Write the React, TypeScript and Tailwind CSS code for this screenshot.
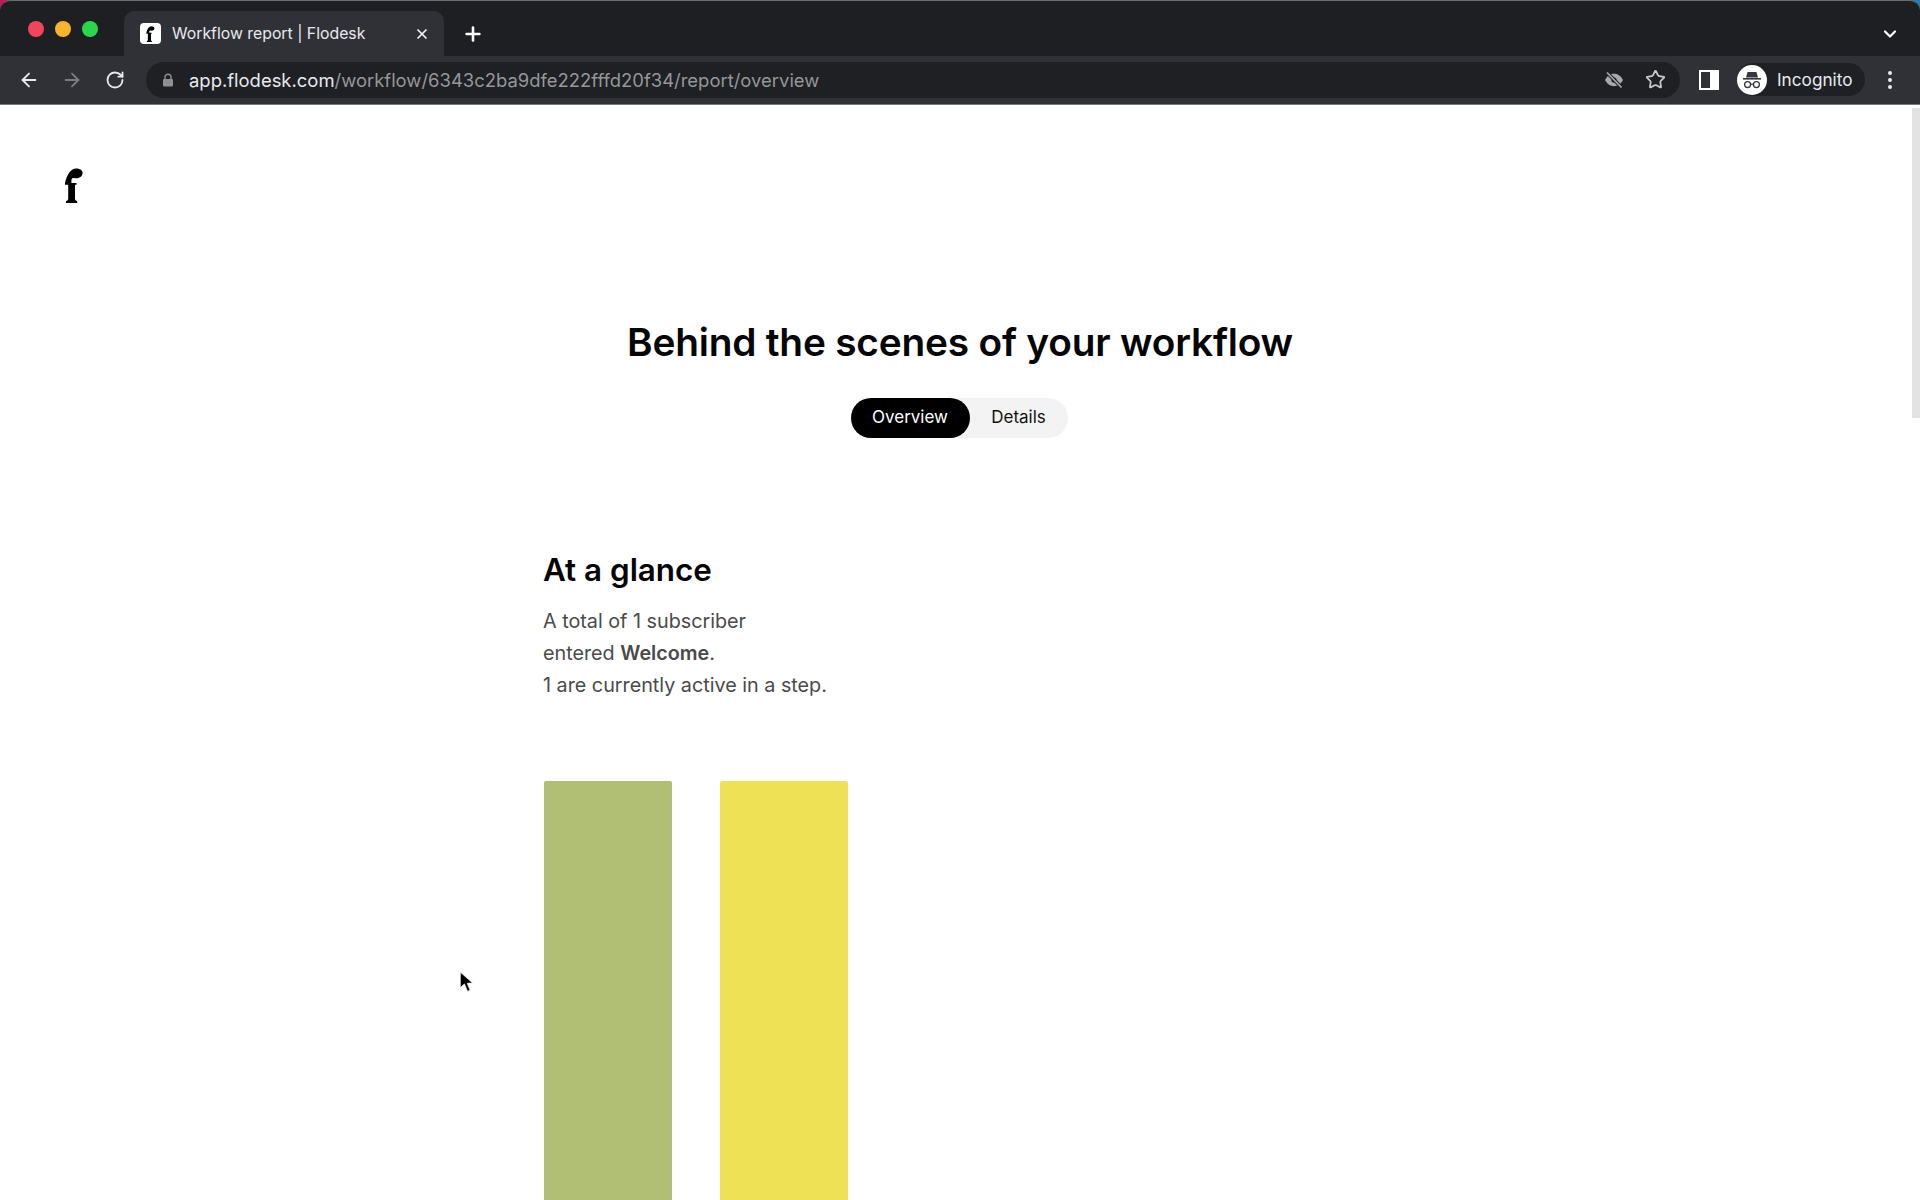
import { ArrowLeft, ArrowRight, RotateCw, X, Plus, ChevronDown, Star } from "lucide-react";

function FLogo({ className }: { className?: string }) {
  return (
    <svg viewBox="0 0 18 35" className={className} fill="currentColor">
      <path d="M0 15 C1.5 8 5 1 10.5 0.5 C15 0.2 18 2.5 17.6 5.5 C17 9.5 12.5 11 9 10 C6.8 9.5 6 11.5 6.5 15 L11.5 15 L11.5 16.8 L10 16.8 L10 30.5 C10 32 10.8 32.8 12.2 33.2 L12.2 35 L1 35 L1 33.2 C2.4 32.8 3.2 32 3.2 30.5 L3.2 16.8 L0 16.8 Z" />
    </svg>
  );
}

function Incognito() {
  return (
    <svg viewBox="0 0 30 30" className="w-[30px] h-[30px]">
      <circle cx="15" cy="15" r="15" fill="#fff" />
      <path d="M10.5 7 h9 l1.5 5.5 h-12 z" fill="#33363a" />
      <rect x="6" y="13" width="18" height="1.6" fill="#33363a" />
      <circle cx="10.6" cy="19.6" r="3" fill="none" stroke="#33363a" strokeWidth="1.3" />
      <circle cx="19.4" cy="19.6" r="3" fill="none" stroke="#33363a" strokeWidth="1.3" />
      <path d="M13.6 19.2 h2.8" stroke="#33363a" strokeWidth="1.2" />
    </svg>
  );
}

function EyeSlash() {
  return (
    <svg viewBox="0 0 20 20" className="h-[20px] w-[20px]">
      <path d="M1 10 C3.5 5.5 6.5 3.8 10 3.8 C13.5 3.8 16.5 5.5 19 10 C16.5 14.5 13.5 16.2 10 16.2 C6.5 16.2 3.5 14.5 1 10 Z" fill="#a9aaac" />
      <circle cx="10" cy="10" r="2.6" fill="#1f2023" />
      <path d="M3 2.5 L17.5 17.5" stroke="#1f2023" strokeWidth="3.6" />
      <path d="M3 2.5 L17.5 17.5" stroke="#a9aaac" strokeWidth="1.7" />
    </svg>
  );
}

export default function App() {
  return (
    <div className="relative h-screen w-full overflow-hidden bg-white font-['Inter',sans-serif]">
      {/* browser chrome */}
      <div className="relative z-0 bg-[#1e1f22]">
        <div className="absolute left-0 top-0 h-3 w-3 bg-[#c2185b]" />
        <div className="absolute right-0 top-0 h-3 w-3 bg-[#2a7ab8]" />
        <div className="relative rounded-t-[10px] border-t border-[#6b6c6e] bg-[#1e1f22]">
          {/* tab strip */}
          <div className="flex h-[55px] items-end">
            <div className="flex h-full w-[124px] items-start gap-[11px] pl-[28px] pt-[20px]">
              <span className="h-4 w-4 rounded-full bg-[#f2455a]" />
              <span className="h-4 w-4 rounded-full bg-[#f9b42d]" />
              <span className="h-4 w-4 rounded-full bg-[#2bd64a]" />
            </div>
            <div className="flex h-[45px] w-[320px] items-center rounded-t-[10px] bg-[#303136] pl-[16px] pr-[14px]">
              <span className="flex h-[21px] w-[21px] items-center justify-center rounded-[4px] bg-white text-black">
                <FLogo className="h-[16px] w-[9px]" />
              </span>
              <span className="ml-[11px] flex-1 text-[15.8px] text-[#e8eaed]">Workflow report | Flodesk</span>
              <X className="h-[16px] w-[16px] text-[#f1f3f4]" strokeWidth={2.6} />
            </div>
            <div className="flex h-[45px] w-[58px] items-center justify-center">
              <Plus className="h-[22px] w-[22px] text-white" strokeWidth={2.8} />
            </div>
            <div className="flex-1" />
            <div className="flex h-[45px] w-[52px] items-center justify-center pr-[8px]">
              <ChevronDown className="h-[20px] w-[20px] text-white" strokeWidth={2.6} />
            </div>
          </div>
          {/* toolbar */}
          <div className="flex h-[49px] items-center border-b border-[#77787a] bg-[#303136] pb-[1px]">
            <div className="flex w-[146px] items-center pl-[18px]">
              <ArrowLeft className="h-[22px] w-[22px] text-[#e8eaed]" strokeWidth={2} />
              <ArrowRight className="ml-[21px] h-[22px] w-[22px] text-[#7b7c7f]" strokeWidth={2} />
              <RotateCw className="ml-[22px] h-[20px] w-[20px] text-[#e8eaed]" strokeWidth={2.2} />
            </div>
            <div className="flex h-[36px] w-[1534px] items-center rounded-full bg-[#1f2023] pl-[16px] pr-[14px]">
              <svg viewBox="0 0 12 14" className="h-[14px] w-[12px]">
                <path d="M3 6 V4.2 a3 3 0 0 1 6 0 V6" fill="none" stroke="#8e8f91" strokeWidth="1.4" />
                <rect x="1" y="6" width="10" height="7.5" rx="1" fill="#8e8f91" />
              </svg>
              <span className="ml-[15px] flex-1 whitespace-nowrap pt-[1px] text-[18.45px] leading-none text-[#e8eaed]">
                app.flodesk.com<span className="text-[#95979a]">/workflow/6343c2ba9dfe222fffd20f34/report/overview</span>
              </span>
              <EyeSlash />
              <Star className="ml-[21px] h-[21px] w-[21px] text-[#c8c9cb]" strokeWidth={2} />
            </div>
            <div className="ml-[19px] flex h-[20px] w-[20px] border-2 border-white">
              <span className="ml-auto h-full w-[7px] bg-white" />
            </div>
            <div className="ml-[18px] flex h-[33px] w-[128px] items-center rounded-full bg-[#1f2023]">
              <Incognito />
              <span className="ml-[10px] pt-[1px] text-[17.2px] text-[#e8eaed]">Incognito</span>
            </div>
            <div className="ml-[23px] flex flex-col gap-[3px]">
              <span className="h-[4px] w-[4px] rounded-full bg-[#e8eaed]" />
              <span className="h-[4px] w-[4px] rounded-full bg-[#e8eaed]" />
              <span className="h-[4px] w-[4px] rounded-full bg-[#e8eaed]" />
            </div>
          </div>
        </div>
      </div>

      {/* page */}
      <div className="relative">
        <div className="absolute right-0 top-[3px] h-[310px] w-[8px] bg-[#e3e3e3]" />
        <div className="pl-[65px] pt-[63px] text-black">
          <FLogo className="h-[35px] w-[18px]" />
        </div>
        <h1 className="mt-[115px] text-center text-[38.8px] font-semibold leading-[48px] tracking-[-0.2px] text-[#050505]">
          Behind the scenes of your workflow
        </h1>
        <div className="mt-[32px] flex justify-center">
          <div className="mr-[2px] flex h-[40px] w-[217px] rounded-full bg-[#f3f3f3] text-[17px]">
            <span className="flex w-[119px] items-center justify-center rounded-full bg-black text-white">Overview</span>
            <span className="flex flex-1 items-center justify-center text-[#111]">Details</span>
          </div>
        </div>
        <div className="ml-[543px] mt-[112px]">
          <h2 className="text-[31.4px] font-semibold leading-[40px] text-[#050505]">At a glance</h2>
          <div className="mt-[15px] text-[19.75px] leading-[32px] text-[#4a4a4a]">
            <p>A total of 1 subscriber</p>
            <p>
              entered <span className="font-semibold">Welcome</span>.
            </p>
            <p>1 are currently active in a step.</p>
          </div>
          <div className="ml-[1px] mt-[80px] flex gap-[48px]">
            <div className="h-[500px] w-[128px] rounded-t-[2px] bg-[#b0bf74]" />
            <div className="h-[500px] w-[128px] rounded-t-[2px] bg-[#eee156]" />
          </div>
        </div>
      </div>

      {/* mouse pointer */}
      <svg viewBox="0 0 14 22" className="absolute left-[459px] top-[971px] h-[23px] w-[15px]">
        <path d="M1 1 L1 16 L5 12.5 L8 19.5 L10.5 18.5 L7.8 11.8 L13 11.5 Z" fill="#000" stroke="#fff" strokeWidth="0.8" />
      </svg>
    </div>
  );
}
